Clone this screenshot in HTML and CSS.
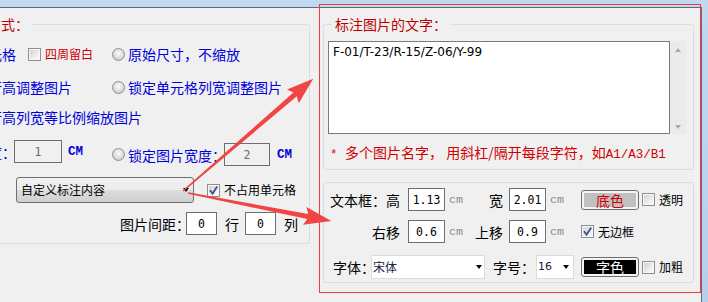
FILE: index.html
```html
<!DOCTYPE html>
<html lang="zh-CN">
<head>
<meta charset="UTF-8">
<meta name="viewport" content="width=device-width, initial-scale=1.0">
<title>插入图片设置</title>
<link rel="stylesheet" href="styles.css">
</head>
<body>

<div class="client">

    <fieldset class="group group-pos">
        <legend>单元格内插入方式：</legend>

        <div class="row row-1">
            <div class="col">
                <span class="radio"></span><span class="opt">图片适应单元格</span>
                <span class="chk"></span><span class="small red">四周留白</span>
            </div>
            <div class="col">
                <span class="radio"></span><span class="opt">原始尺寸，不缩放</span>
            </div>
        </div>

        <div class="row row-2">
            <div class="col">
                <span class="radio"></span><span class="opt">锁定单元格行高调整图片</span>
            </div>
            <div class="col">
                <span class="radio"></span><span class="opt">锁定单元格列宽调整图片</span>
            </div>
        </div>

        <div class="row row-3">
            <div class="col">
                <span class="radio"></span><span class="opt">锁定单元格行高列宽等比例缩放图片</span>
            </div>
        </div>

        <div class="row row-4">
            <div class="col">
                <span class="radio"></span><span class="opt">锁定图片高度：</span>
                <input class="num num-off size-h" type="text" value="1" readonly>
                <span class="unit">CM</span>
            </div>
            <div class="col col-low">
                <span class="radio"></span><span class="opt">锁定图片宽度：</span>
                <input class="num num-off size-w" type="text" value="2" readonly>
                <span class="unit">CM</span>
            </div>
        </div>

        <div class="row row-5">
            <div class="dropdown">自定义标注内容<span class="caret"></span></div>
            <span class="chk"><svg viewBox="0 0 11 11" width="11" height="11"><path d="M2 5.2 L4.6 8.6 L9.2 1.6" fill="none" stroke="#3f5291" stroke-width="1.8"/></svg></span>
            <span class="small">不占用单元格</span>
        </div>

        <div class="row row-6">
            <span class="gap-label">图片间距：</span>
            <input class="num gap-num gap-row" type="text" value="0">
            <span class="gap-unit">行</span>
            <input class="num gap-num" type="text" value="0">
            <span class="gap-unit">列</span>
        </div>
    </fieldset>

    <div class="side">
        <fieldset class="group group-text">
            <legend>标注图片的文字：</legend>
            <div class="memo">
                <textarea class="memo-text">F-01/T-23/R-15/Z-06/Y-99</textarea>
                <div class="vscroll"><span class="tri-up"></span><span class="tri-down"></span></div>
            </div>
            <p class="note"><span class="mono">* </span>多个图片名字， 用斜杠/隔开每段字符，如<span class="mono">A1/A3/B1</span></p>
        </fieldset>

        <div class="group group-style">
            <div class="srow">
                <span class="lbl">文本框：高</span>
                <input class="num" type="text" value="1.13">
                <span class="cm">cm</span>
                <span class="lbl2">宽</span>
                <input class="num" type="text" value="2.01">
                <span class="cm">cm</span>
                <button class="swatch swatch-back"><span>底色</span></button>
                <span class="chk"></span><span class="small">透明</span>
            </div>
            <div class="srow srow-2">
                <span class="lbl">右移</span>
                <input class="num" type="text" value="0.6">
                <span class="cm">cm</span>
                <span class="lbl2">上移</span>
                <input class="num" type="text" value="0.9">
                <span class="cm">cm</span>
                <span class="chk chk-wide"><svg viewBox="0 0 11 11" width="11" height="11"><path d="M2 5.2 L4.6 8.6 L9.2 1.6" fill="none" stroke="#3f5291" stroke-width="1.8"/></svg></span>
                <span class="small">无边框</span>
            </div>
            <div class="srow srow-3">
                <span class="lbl-font">字体：</span>
                <div class="select select-font">宋体<span class="caret"></span></div>
                <span class="lbl-size">字号：</span>
                <div class="select select-size">16<span class="caret"></span></div>
                <button class="swatch swatch-font"><span>字色</span></button>
                <span class="chk"></span><span class="small">加粗</span>
            </div>
        </div>
    </div>

</div>

<svg class="marks" width="708" height="302" viewBox="0 0 708 302">
    <rect x="319.5" y="4.5" width="381" height="288" fill="none" stroke="#f23c3c" stroke-width="1"/>
    <g fill="#f24444">
        <polygon transform="translate(183 191) rotate(-40.75)" points="0,-0.7 148,-2.6 145,-9 172,0 145,9 148,2.6 0,0.7"/>
        <polygon transform="translate(188 193) rotate(11.08)" points="0,-0.7 122,-2.6 119,-9 146,0 119,9 122,2.6 0,0.7"/>
    </g>
</svg>

</body>
</html>
```

FILE: styles.css
```css
/* Page and window frame */
* {
    box-sizing: border-box;
}

body {
    position: relative;
    margin: 0;
    width: 708px;
    height: 302px;
    overflow: hidden;
    background: linear-gradient(to bottom, #c1d8f1, #b7cfea);
    font-family: "Noto Sans CJK SC", "Liberation Sans", sans-serif;
    font-size: 14px;
    line-height: 14px;
    color: #000000;
}

button {
    font: inherit;
    cursor: pointer;
}

.client {
    display: flex;
    align-items: flex-start;
    width: 702px;
    height: 295px;
    margin-top: 7px;
    border-top: 1px solid #5d6c7d;
    border-right: 1px solid #5d6c7d;
    background-color: #f0f0f0;
    overflow: hidden;
}

/* Group boxes */
.group {
    flex: none;
    margin: 9px 0 0 0;
    padding: 0;
    min-width: 0;
    border: 1px solid #d5dfe5;
    border-radius: 3px;
}

.group legend {
    margin-left: 4px;
    padding: 0 3px;
    color: #c00000;
    line-height: 14px;
}

/* Left group: position of the picture */
.group-pos {
    width: 443px;
    height: 227px;
    margin-left: -133px;
    padding-left: 34px;
}

.group-pos legend {
    margin-left: -2px;
}

.row {
    display: flex;
    align-items: center;
}

.row-1 { height: 20px; margin-top: 13px; }
.row-2 { height: 20px; margin-top: 13px; }
.row-3 { height: 20px; margin-top: 10px; }
.row-4 { height: 26px; margin-top: 13px; align-items: flex-start; }
.row-5 { height: 26px; margin-top: 11px; }
.row-6 { height: 23px; margin-top: 9px; }

.col {
    display: flex;
    align-items: center;
    flex: none;
    width: 210px;
}

.row-4 .col {
    height: 23px;
}

.row-4 .col-low {
    margin-top: 3px;
}

.opt {
    color: #0000d8;
    white-space: nowrap;
}

.red {
    color: #c80000;
}

.small {
    margin-left: 4px;
    font-size: 12px;
    line-height: 12px;
    white-space: nowrap;
}

/* Radio and check boxes */
.radio {
    flex: none;
    width: 13px;
    height: 13px;
    margin-right: 3px;
    border: 1px solid #8f8f8f;
    border-radius: 50%;
    background: radial-gradient(circle at 50% 40%, #fbfbfb 0%, #e2e2e2 45%, #bdbdbd 100%);
}

.chk {
    flex: none;
    width: 13px;
    height: 13px;
    border: 1px solid #8f8f8f;
    background: linear-gradient(135deg, #cfcfcf, #f2f2f2 70%, #ffffff);
    box-shadow: inset 0 0 0 1px #f7f7f7;
}

.chk svg {
    display: block;
}

.row-1 .chk { margin-left: 12px; }
.row-5 .chk { margin-left: 13px; }

/* Number fields */
.num {
    flex: none;
    width: 37px;
    height: 23px;
    margin: 0;
    padding: 0;
    border: 1px solid #6e6e6e;
    background-color: #ffffff;
    font-family: "DejaVu Sans Mono", monospace;
    font-size: 11.5px;
    text-align: center;
    color: #000000;
    outline: none;
}

.num-off {
    background-color: #f0f0f0;
    color: #6d6d6d;
}

.size-h { width: 48px; margin-left: -2px; }
.size-w { width: 46px; margin-left: -2px; }

.unit {
    margin-left: 6px;
    font-family: "Liberation Mono", monospace;
    font-weight: bold;
    font-size: 12.5px;
    color: #0000d8;
}

.col-low .unit { margin-left: 7px; }

/* Drop-down button */
.dropdown {
    display: flex;
    align-items: center;
    flex: none;
    width: 178px;
    height: 26px;
    margin-left: 114px;
    padding: 0 4px;
    border: 1px solid #707070;
    border-radius: 3px;
    background: linear-gradient(to bottom, #f2f2f2 0%, #ebebeb 48%, #dddddd 52%, #cfcfcf 100%);
    font-size: 12px;
    white-space: nowrap;
}

.caret {
    width: 0;
    height: 0;
    margin-left: auto;
    border-left: 3.5px solid transparent;
    border-right: 3.5px solid transparent;
    border-top: 4px solid #000000;
}

/* Picture spacing */
.gap-label {
    margin-left: 218px;
    white-space: nowrap;
}

.gap-num { width: 31px; }
.gap-row { margin-left: -4px; }

.gap-unit {
    margin: 0 6px 0 8px;
}

/* Right column */
.side {
    flex: none;
    width: 371px;
    margin-left: 13px;
}

.group-text {
    width: 371px;
    height: 153px;
    padding-left: 4px;
}

.memo {
    display: flex;
    margin-top: 10px;
}

.memo-text {
    flex: none;
    width: 342px;
    height: 93px;
    margin: 0;
    padding: 3px 4px;
    border: 1px solid #7a7a7a;
    font-family: "DejaVu Sans", sans-serif;
    font-size: 12px;
    line-height: 15px;
    color: #000000;
    resize: none;
    outline: none;
}

.vscroll {
    display: flex;
    flex-direction: column;
    justify-content: space-between;
    align-items: center;
    flex: none;
    width: 16px;
    height: 93px;
    padding: 7px 0 5px;
    background-color: #ebebeb;
}

.tri-up {
    border-left: 3.5px solid transparent;
    border-right: 3.5px solid transparent;
    border-bottom: 4px solid #a8a8a8;
}

.tri-down {
    border-left: 3.5px solid transparent;
    border-right: 3.5px solid transparent;
    border-top: 4px solid #a8a8a8;
}

.note {
    margin: 11px 0 0 2px;
    color: #d00000;
    white-space: nowrap;
}

.mono {
    font-family: "Liberation Mono", monospace;
    font-size: 12.5px;
    white-space: pre;
}

/* Right group: text box style */
.group-style {
    width: 371px;
    height: 101px;
    margin-top: 12px;
    padding-top: 5px;
}

.srow {
    display: flex;
    align-items: center;
    height: 23px;
}

.srow-2 { margin-top: 9px; }
.srow-3 { height: 24px; margin-top: 12px; }

.lbl {
    flex: none;
    width: 84px;
    padding-right: 8px;
    text-align: right;
    white-space: nowrap;
}

.lbl2 {
    flex: none;
    width: 46px;
    padding-right: 6px;
    text-align: right;
    white-space: nowrap;
}

.cm {
    flex: none;
    width: 18px;
    padding-left: 4px;
    font-family: "Liberation Mono", monospace;
    font-size: 11.7px;
    color: #8c8c8c;
}

.chk-wide { margin-left: 17px; }

.lbl-font {
    flex: none;
    width: 47px;
    padding-left: 9px;
    white-space: nowrap;
}

.lbl-size {
    flex: none;
    width: 51px;
    padding-left: 8px;
    white-space: nowrap;
}

.select {
    display: flex;
    align-items: center;
    flex: none;
    height: 24px;
    border: 1px solid #dcdcdc;
    background-color: #ffffff;
    font-size: 12px;
    color: #202040;
}

.select-font {
    width: 114px;
    padding: 0 2px 0 1px;
}

.select-size {
    width: 38px;
    padding: 0 4px 0 1px;
    font-family: "DejaVu Sans", sans-serif;
    font-size: 11px;
}

/* Colour buttons */
.swatch {
    display: flex;
    flex: none;
    width: 58px;
    height: 20px;
    margin: 0 3px 0 17px;
    padding: 2px;
    border: 1px solid #707070;
    border-radius: 3px;
    background-color: #f3f3f3;
}

.swatch span {
    display: flex;
    align-items: center;
    justify-content: center;
    flex: 1;
    font-size: 14px;
    line-height: 14px;
}

.swatch-back span {
    background-color: #c0c0c0;
    color: #d00000;
}

.swatch-font {
    margin-left: 7px;
}

.swatch-font span {
    background-color: #000000;
    color: #ffffff;
}

/* Red marks drawn over the dialog */
.marks {
    position: absolute;
    top: 0;
    left: 0;
    pointer-events: none;
}
```
